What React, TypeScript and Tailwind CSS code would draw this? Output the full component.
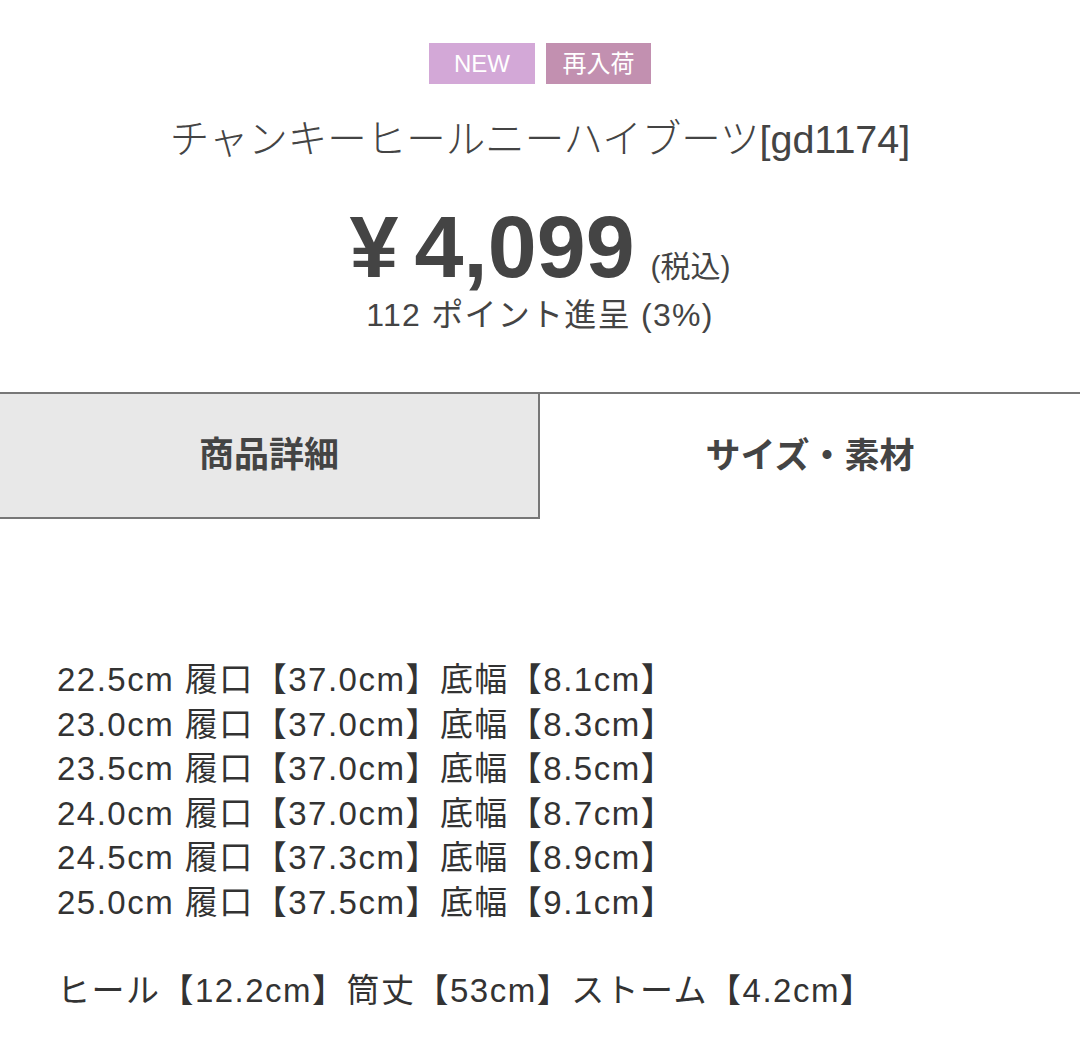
const rows = [
  ["22.5cm", "37.0cm", "8.1cm"],
  ["23.0cm", "37.0cm", "8.3cm"],
  ["23.5cm", "37.0cm", "8.5cm"],
  ["24.0cm", "37.0cm", "8.7cm"],
  ["24.5cm", "37.3cm", "8.9cm"],
  ["25.0cm", "37.5cm", "9.1cm"],
];

export default function App() {
  return (
    <div
      className="w-[1080px] h-[1038px] overflow-hidden bg-white text-[#3a3a3a]"
      style={{ fontFamily: '"Liberation Sans", "Noto Sans CJK JP", sans-serif' }}
    >
      {/* header */}
      <div className="flex flex-col items-center pt-[43px]">
        <div className="flex gap-[11px]">
          <span className="flex h-[41px] w-[106px] items-center justify-center bg-[#d3a8d7] text-[24px] text-white">
            NEW
          </span>
          <span className="flex h-[41px] w-[105px] items-center justify-center bg-[#c290b0] text-[24px] text-white">
            再入荷
          </span>
        </div>
        <h1 className="mt-[30px] text-[39.5px] leading-[50px] font-light text-[#444]">
          チャンキーヒールニーハイブーツ[gd1174]
        </h1>
        <div className="mt-[38px] flex items-baseline">
          <span className="text-[88px] leading-[90px] font-bold text-[#444]">
            <span className="mr-[16px]">¥</span>4,099
          </span>
          <span className="ml-[16px] text-[30px] text-[#444]">(税込)</span>
        </div>
        <div className="mt-[3px] text-[32px] leading-[40px] tracking-[0.04em] text-[#444]">112 ポイント進呈 (3%)</div>
      </div>

      {/* tabs */}
      <div className="mt-[57px] flex border-t-2 border-[#777]">
        <div className="flex h-[125px] w-[540px] items-center justify-center border-r-2 border-b-2 border-[#777] bg-[#e8e8e8] text-[35px] font-bold text-[#444]">
          商品詳細
        </div>
        <div className="flex h-[125px] flex-1 items-center justify-center text-[35px] font-bold text-[#444]">
          サイズ・素材
        </div>
      </div>

      {/* size table */}
      <div className="pl-[57px] pt-[139px] text-[33px] leading-[44.5px] tracking-[0.045em] text-[#333]">
        {rows.map((r) => (
          <div key={r[0]}>
            {r[0]} 履口【{r[1]}】底幅【{r[2]}】
          </div>
        ))}
        <div className="mt-[44px]">ヒール【12.2cm】筒丈【53cm】ストーム【4.2cm】</div>
      </div>
    </div>
  );
}
